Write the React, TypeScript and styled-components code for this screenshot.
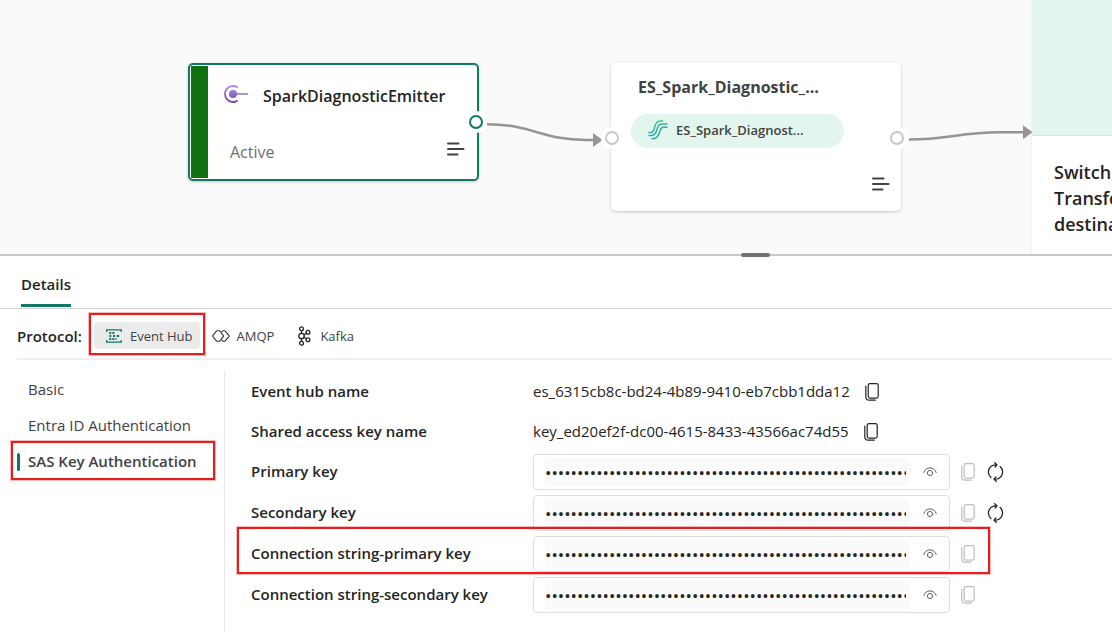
import React from "react";
import styled, { createGlobalStyle } from "styled-components";

const GlobalStyle = createGlobalStyle`
  *, *::before, *::after { box-sizing: border-box; }
  body {
    margin: 0;
    background: #ffffff;
    color: #242424;
    font-family: "Segoe UI", "Open Sans", "Noto Sans", sans-serif;
    font-size: 15px;
    line-height: 20px;
  }
  button, input { font: inherit; color: inherit; }
`;

const Page = styled.div`
  display: flex;
  flex-direction: column;
  min-height: 100vh;
`;

const Canvas = styled.main`
  position: relative;
  flex: 1 0 254px;
  overflow: hidden;
  background: #fafafa;
`;

const Edges = styled.svg`
  position: absolute;
  inset: 0;
  width: 100%;
  height: 100%;
`;

const Node = styled.article<{ $x: number; $y: number; $w: number; $h: number; $selected?: boolean }>`
  position: absolute;
  left: ${(p) => p.$x}px;
  top: ${(p) => p.$y}px;
  width: ${(p) => p.$w}px;
  height: ${(p) => p.$h}px;
  display: flex;
  background: #ffffff;
  border: ${(p) => (p.$selected ? "2px solid #117865" : "0")};
  border-radius: 5px;
  box-shadow: 0 1px 3px rgba(0, 0, 0, 0.22);
`;

const StatusBar = styled.div`
  width: 17px;
  margin: 1px 0 1px 1px;
  background: #107010;
`;

const NodeBody = styled.div<{ $pad: string }>`
  flex: 1;
  display: flex;
  flex-direction: column;
  justify-content: space-between;
  padding: ${(p) => p.$pad};
`;

const NodeRow = styled.div<{ $align?: string; $end?: boolean }>`
  display: flex;
  align-items: ${(p) => p.$align || "center"};
  justify-content: ${(p) => (p.$end ? "flex-end" : "flex-start")};
`;

const SourceTitle = styled.h2`
  margin: 4px 0 0 14px;
  font-size: 16px;
  line-height: 24px;
  font-weight: 600;
`;

const StreamTitle = styled.h2`
  margin: 0 0 0 7px;
  font-size: 16px;
  line-height: 24px;
  font-weight: 700;
  color: #424242;
`;

const Status = styled.span`
  flex: 1;
  padding-left: 6px;
  font-size: 16px;
  line-height: 24px;
  color: #707070;
`;

const Pill = styled.div`
  display: flex;
  align-items: center;
  gap: 8px;
  width: 213px;
  height: 34px;
  margin-bottom: 12px;
  padding: 0 17px 2px;
  border-radius: 17px;
  background: #e2f6ed;
  color: #424242;
  font-size: 13px;
  font-weight: 600;
`;

const IconButton = styled.button<{ $muted?: boolean }>`
  display: inline-flex;
  padding: 2px 0;
  border: 0;
  background: none;
  color: ${(p) => (p.$muted ? "#bdbdbd" : "#242424")};
  cursor: pointer;
`;

const Port = styled.span<{ $x: number; $y: number; $active?: boolean }>`
  position: absolute;
  left: ${(p) => p.$x}px;
  top: ${(p) => p.$y}px;
  width: 22px;
  height: 22px;
  border: 4px solid #ffffff;
  border-radius: 50%;
  background: #ffffff;

  &::before {
    content: "";
    display: block;
    height: 14px;
    border: 2px solid ${(p) => (p.$active ? "#117865" : "#c8c8c8")};
    border-radius: 50%;
  }
`;

const HintNode = styled(Node)`
  flex-direction: column;
  box-shadow: 0 0 2px rgba(0, 0, 0, 0.12);
`;

const HintArt = styled.div`
  height: 136px;
  border-radius: 5px 5px 0 0;
  border-bottom: 1px solid #e0e0e0;
  background: #e2f6ed;
`;

const HintText = styled.p`
  margin: 0;
  padding: 23px 22px;
  font-size: 18px;
  line-height: 26px;
  font-weight: 600;
`;

const Panel = styled.section`
  position: relative;
  border-top: 2px solid #c8c8c8;
  background: #ffffff;
`;

const Grip = styled.div`
  position: absolute;
  top: -3px;
  right: 342px;
  width: 29px;
  height: 4px;
  border-radius: 2px;
  background: #707070;
`;

const TabList = styled.div`
  display: flex;
  padding: 0 21px;
  border-bottom: 1px solid #d1d1d1;
`;

const Tab = styled.button`
  height: 52px;
  padding: 3px 0 0;
  border: 0;
  background: linear-gradient(#117865, #117865) 0 48px / 100% 3px no-repeat;
  font-weight: 600;
  cursor: pointer;
`;

const Protocols = styled.div`
  display: flex;
  align-items: center;
  height: 51px;
  margin-left: 17px;
  border-bottom: 2px solid #f0f0f0;
`;

const ProtocolLabel = styled.span`
  width: 77px;
  padding-top: 4px;
  font-weight: 600;
`;

const Framed = styled.div`
  position: relative;
`;

const Frame = styled.span<{ $inset: string }>`
  position: absolute;
  inset: ${(p) => p.$inset};
  border: 2px solid #e81c1c;
  outline: 1px solid rgba(232, 28, 28, 0.3);
  pointer-events: none;
`;

const Protocol = styled.button<{ $on?: boolean; $gap: number }>`
  display: flex;
  align-items: center;
  gap: ${(p) => p.$gap}px;
  height: 27px;
  margin-top: 4px;
  padding: 0 ${(p) => (p.$on ? 7 : 11)}px 0 12px;
  border: 0;
  border-radius: 4px;
  background: ${(p) => (p.$on ? "#ebebeb" : "none")};
  color: #424242;
  font-size: 13px;
  cursor: pointer;
`;

const Body = styled.div`
  display: flex;
  padding: 11px 0 3px;
`;

const Side = styled.nav`
  display: flex;
  flex-direction: column;
  flex: none;
  width: 225px;
  min-height: 261px;
  padding-left: 11px;
  border-right: 1px solid #e8e8e8;
`;

const SideItem = styled.button<{ $on?: boolean }>`
  position: relative;
  display: block;
  width: 204px;
  height: 36px;
  padding: 0 0 0 17px;
  border: 0;
  background: none;
  color: #424242;
  font-weight: ${(p) => (p.$on ? 600 : 400)};
  text-align: left;
  cursor: pointer;

  &::before {
    content: "";
    position: absolute;
    left: 6px;
    top: 10px;
    width: 3px;
    height: 18px;
    border-radius: 2px;
    background: ${(p) => (p.$on ? "#117865" : "transparent")};
  }
`;

const Fields = styled.form`
  display: flex;
  flex-direction: column;
  align-items: flex-start;
  gap: 5px;
  flex: 1;
  padding: 3px 24px 0 26px;
`;

const Field = styled.div<{ $secret?: boolean }>`
  position: relative;
  display: flex;
  align-items: center;
  height: ${(p) => (p.$secret ? 36 : 35)}px;
`;

const FieldLabel = styled.label`
  flex: none;
  width: 282px;
  padding-bottom: 2px;
  font-weight: 600;
`;

const Value = styled.output`
  margin-right: 15px;
  padding-bottom: 2px;
  white-space: nowrap;
`;

const SecretBox = styled.div`
  display: flex;
  align-items: center;
  flex: none;
  width: 417px;
  height: 36px;
  padding: 0 11px;
  border: 1px solid #dedede;
  border-radius: 4px;
  margin-right: 11px;
`;

const SecretInput = styled.input`
  width: 364px;
  height: 28px;
  padding: 0 3px 0 0;
  border: 0;
  outline: 0;
  background: #fafafa;
  font-size: 17px;
  margin-right: 14px;
`;

const Actions = styled.div`
  display: flex;
  align-items: center;
  gap: 12px;
`;

const MenuIcon = () => (
  <svg width="18" height="14" viewBox="0 0 18 14" fill="none" stroke="#424242" strokeWidth="2" strokeLinecap="round">
    <path d="M1 1.500h10.500M1 7h15.500M1 12.500h9.500" />
  </svg>
);

const SourceIcon = () => (
  <svg width="25" height="18" viewBox="0 0 25 18" fill="none" strokeLinecap="round">
    <defs>
      <linearGradient id="source" x1="0" y1="0" x2="0" y2="18" gradientUnits="userSpaceOnUse">
        <stop stopColor="#b78ae6" />
        <stop offset="1" stopColor="#6b4aa5" />
      </linearGradient>
    </defs>
    <path d="M13 2.100A8 8 0 1 0 13 15.900" stroke="url(#source)" strokeWidth="1.800" />
    <path d="M9 9H23.500" stroke="#8f6fce" strokeWidth="1.600" />
    <circle cx="9" cy="9" r="4" fill="url(#source)" />
  </svg>
);

const StreamIcon = () => (
  <svg width="20" height="20" viewBox="0 0 20 20" fill="none" strokeWidth="1.500" strokeLinecap="round">
    <defs>
      <linearGradient id="stream" x1="4" y1="0" x2="12" y2="20" gradientUnits="userSpaceOnUse">
        <stop stopColor="#38c98b" />
        <stop offset="1" stopColor="#239fb2" />
      </linearGradient>
    </defs>
    <g stroke="url(#stream)">
      <path d="M1 12.500h1.500c3 0 3.500-2.500 4.200-5.500C7.600 3.200 9 1 12.500 1h2" />
      <path d="M1 15.500h2.500c4 0 5-3.500 5.800-7C10.200 5 11.500 4 14 4h5" />
      <path d="M4 18.800c5 0 7-3 8-8 .6-2.500 1.300-3.600 3.500-3.600H19" />
    </g>
  </svg>
);

const EventHubIcon = () => (
  <svg width="16" height="14" viewBox="0 0 16 14" fill="none" stroke="#117865" strokeWidth="1.300">
    <path d="M.7 3V.8h14.600V3M.7 11v2.200h14.600V11" />
    <path
      fill="#117865"
      stroke="none"
      d="M3.300 3h2v2h-2zM6.300 3h2v2h-2zM3.300 6h2v2h-2zM7 6h2v2H7zM11 6h2.200v2H11zM3.300 9h2v2h-2zM6.300 9h2v2h-2z"
    />
    <path d="M9 10h2M9.500 7h1" strokeWidth="1" />
  </svg>
);

const AmqpIcon = () => (
  <svg width="18" height="12" viewBox="0 0 18 12" fill="none" stroke="#333333" strokeWidth="1.100" strokeLinejoin="round">
    <path d="M.9 6.600a1 1 0 0 1 0-1.200L4.400 1.200a1 1 0 0 1 .8-.4h2a1 1 0 0 1 .8.400l3.200 4.200a1 1 0 0 1 0 1.200L8 10.800a1 1 0 0 1-.8.400h-2a1 1 0 0 1-.8-.4z" />
    <path d="M9.800 1.800l.6-.6a1 1 0 0 1 .8-.4h1.200a1 1 0 0 1 .8.400l3.700 4.200a1 1 0 0 1 0 1.200l-3.700 4.200a1 1 0 0 1-.8.400h-1.200a1 1 0 0 1-.8-.4l-.6-.6" />
  </svg>
);

const KafkaIcon = () => (
  <svg width="14" height="20" viewBox="0 0 14 20" fill="none" stroke="#242424" strokeWidth="1.300">
    <circle cx="4.500" cy="2.700" r="1.900" />
    <circle cx="4.500" cy="10" r="2.700" />
    <circle cx="4.500" cy="17.300" r="1.900" />
    <circle cx="11" cy="6.200" r="1.900" />
    <circle cx="11" cy="13.800" r="1.900" />
    <path d="M4.500 4.600v2.700M4.500 12.700v2.700M6.900 8.700l2.400-1.500M6.900 11.300l2.400 1.500" />
  </svg>
);

const CopyIcon = () => (
  <svg width="14" height="18" viewBox="0 0 14 18" fill="none" stroke="currentColor" strokeWidth="1.200" strokeLinecap="round">
    <rect x="3.200" y=".7" width="10" height="14.400" rx="1.800" />
    <path d="M.8 3.200v10.600c0 2 1.300 3.400 3.300 3.400h6.200" />
  </svg>
);

const EyeIcon = () => (
  <svg width="14" height="10" viewBox="0 0 14 10" fill="none" stroke="#616161" strokeWidth="1" strokeLinecap="round">
    <path d="M.8 5.500C1.700 2.700 4 .9 7 .9s5.300 1.800 6.200 4.600" />
    <circle cx="7" cy="6" r="2.600" />
  </svg>
);

const RegenerateIcon = () => (
  <svg width="17" height="20" viewBox="0 0 17 20" fill="none" stroke="#242424" strokeWidth="1.300" strokeLinecap="round" strokeLinejoin="round">
    <path d="M3.900 15.500A7.300 7.300 0 0 1 6.500 3.100L9.800 2.800M7.700.8L9.900 2.800 8.100 5.100" />
    <path d="M13.100 4.500A7.300 7.300 0 0 1 10.500 16.900L7.200 17.200M9.300 19.200L7.100 17.200l1.800-2.300" />
  </svg>
);

const names = [
  { id: "hub-name", label: "Event hub name", value: "es_6315cb8c-bd24-4b89-9410-eb7cbb1dda12" },
  { id: "key-name", label: "Shared access key name", value: "key_ed20ef2f-dc00-4615-8433-43566ac74d55" },
];

const secrets = [
  { id: "primary", label: "Primary key", renew: true },
  { id: "secondary", label: "Secondary key", renew: true },
  { id: "conn-primary", label: "Connection string-primary key", framed: true },
  { id: "conn-secondary", label: "Connection string-secondary key" },
];

const mask = "0".repeat(64);

export default function App() {
  return (
    <Page>
      <GlobalStyle />
      <Canvas>
        <Node $x={188} $y={63} $w={291} $h={118} $selected>
          <StatusBar />
          <NodeBody $pad="15px 12px 15px 16px">
            <NodeRow>
              <SourceIcon />
              <SourceTitle>SparkDiagnosticEmitter</SourceTitle>
            </NodeRow>
            <NodeRow $align="flex-start">
              <Status>Active</Status>
              <IconButton type="button" aria-label="Source menu"><MenuIcon /></IconButton>
            </NodeRow>
          </NodeBody>
        </Node>
        <Node $x={611} $y={63} $w={290} $h={148}>
          <NodeBody $pad="12px 11px 18px 20px">
            <StreamTitle>ES_Spark_Diagnostic_...</StreamTitle>
            <Pill>
              <StreamIcon />
              ES_Spark_Diagnost...
            </Pill>
            <NodeRow $end>
              <IconButton type="button" aria-label="Stream menu"><MenuIcon /></IconButton>
            </NodeRow>
          </NodeBody>
        </Node>
        <HintNode $x={1032} $y={0} $w={290} $h={270}>
          <HintArt />
          <HintText>
            Switch
            <br />
            Transform
            <br />
            destination
          </HintText>
        </HintNode>
        <Edges fill="none" stroke="#979593" strokeWidth="2.500">
          <path d="M487 124.300C533 124.300 541 140 586 140H594" />
          <path d="M593 133l9.500 7-9.500 7z" fill="#979593" stroke="none" />
          <path d="M909 139.500C948 139.500 960 132.300 1000 132.300H1024" />
          <path d="M1023 125.300l9.500 7-9.500 7z" fill="#979593" stroke="none" />
        </Edges>
        <Port $x={465} $y={111} $active />
        <Port $x={601} $y={127} />
        <Port $x={886} $y={127} />
      </Canvas>
      <Panel>
        <Grip />
        <TabList role="tablist">
          <Tab type="button" role="tab" aria-selected="true">Details</Tab>
        </TabList>
        <Protocols>
          <ProtocolLabel>Protocol:</ProtocolLabel>
          <Framed>
            <Protocol type="button" $on $gap={8}>
              <EventHubIcon />
              Event Hub
            </Protocol>
            <Frame $inset="-5px -5px -6px -5px" />
          </Framed>
          <Protocol type="button" $gap={7}>
            <AmqpIcon />
            AMQP
          </Protocol>
          <Protocol type="button" $gap={9}>
            <KafkaIcon />
            Kafka
          </Protocol>
        </Protocols>
        <Body>
          <Side>
            <SideItem type="button">Basic</SideItem>
            <SideItem type="button">Entra ID Authentication</SideItem>
            <SideItem type="button" $on>
              SAS Key Authentication
              <Frame $inset="-2px 0 -1px 0" />
            </SideItem>
          </Side>
          <Fields>
            {names.map((n) => (
              <Field key={n.id}>
                <FieldLabel htmlFor={n.id}>{n.label}</FieldLabel>
                <Value id={n.id}>{n.value}</Value>
                <IconButton type="button" aria-label={`Copy ${n.label}`}><CopyIcon /></IconButton>
              </Field>
            ))}
            {secrets.map((s) => (
              <Field key={s.id} $secret>
                <FieldLabel htmlFor={s.id}>{s.label}</FieldLabel>
                <SecretBox>
                  <SecretInput id={s.id} type="password" readOnly value={mask} />
                  <IconButton type="button" aria-label={`Show ${s.label}`}><EyeIcon /></IconButton>
                </SecretBox>
                <Actions>
                  <IconButton type="button" $muted aria-label={`Copy ${s.label}`}><CopyIcon /></IconButton>
                  {s.renew && (
                    <IconButton type="button" aria-label={`Regenerate ${s.label}`}><RegenerateIcon /></IconButton>
                  )}
                </Actions>
                {s.framed && <Frame $inset="-9px -15px -2px -14px" />}
              </Field>
            ))}
          </Fields>
        </Body>
      </Panel>
    </Page>
  );
}
